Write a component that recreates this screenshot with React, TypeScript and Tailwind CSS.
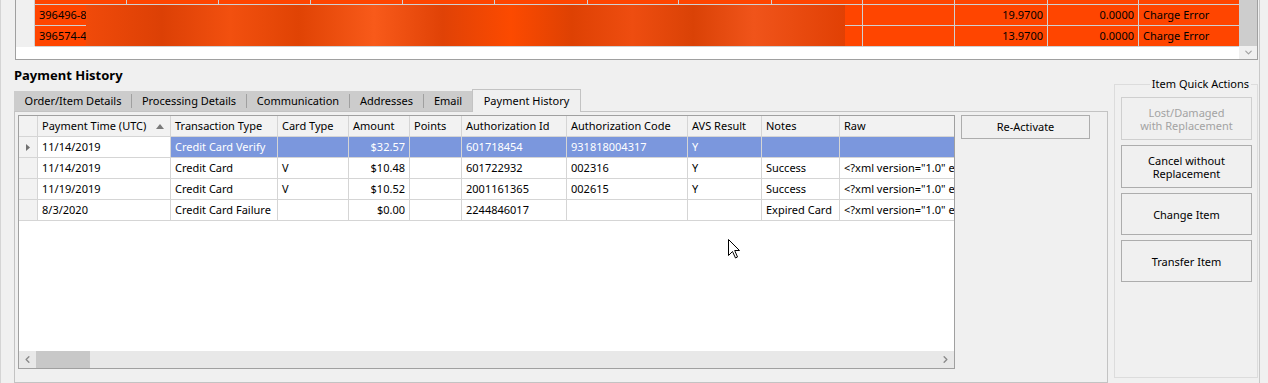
import { ChevronDown, ChevronLeft, ChevronRight } from "lucide-react";

const topCols = [
  "w-[92px]", "w-[92px]", "w-[92px]", "w-[92px]", "w-[92px]", "w-[93px]", "w-[91px]",
  "w-[93px]", "w-[91px]", "w-[92px]", "w-[93px]", "w-[91px]", "w-[100px]",
];

const topRows = [
  ["396496-8", "", "", "", "", "", "", "", "", "", "19.9700", "0.0000", "Charge Error"],
  ["396574-4", "", "", "", "", "", "", "", "", "", "13.9700", "0.0000", "Charge Error"],
];

const columns = [
  { label: "Payment Time (UTC)", w: "w-[133px]", sort: true },
  { label: "Transaction Type", w: "w-[107px]" },
  { label: "Card Type", w: "w-[71px]" },
  { label: "Amount", w: "w-[61px]", right: true },
  { label: "Points", w: "w-[52px]" },
  { label: "Authorization Id", w: "w-[105px]" },
  { label: "Authorization Code", w: "w-[121px]" },
  { label: "AVS Result", w: "w-[74px]" },
  { label: "Notes", w: "w-[78px]" },
  { label: "Raw", w: "w-[160px]" },
];

const raw = '<?xml version="1.0" encoding="utf-8"?>';

const payments = [
  ["11/14/2019", "Credit Card Verify", "", "$32.57", "", "601718454", "931818004317", "Y", "", ""],
  ["11/14/2019", "Credit Card", "V", "$10.48", "", "601722932", "002316", "Y", "Success", raw],
  ["11/19/2019", "Credit Card", "V", "$10.52", "", "2001161365", "002615", "Y", "Success", raw],
  ["8/3/2020", "Credit Card Failure", "", "$0.00", "", "2244846017", "", "", "Expired Card", raw],
];

const tabs = [
  { label: "Order/Item Details", w: "w-[116px]" },
  { label: "Processing Details", w: "w-[114px]" },
  { label: "Communication", w: "w-[102px]" },
  { label: "Addresses", w: "w-[73px]" },
];

function TopGrid() {
  return (
    <div className="relative ml-[14px] flex h-[60px] w-[1243px] border-x border-b border-[#a0a0a0] bg-white">
      <div className="flex w-[1223px] flex-col">
        <div className="flex h-[4px]">
          <div className="w-[19px] border-r border-[#d0d0d0] bg-[#f0f0f0]" />
          {topCols.map((w, i) => (
            <div key={i} className={`${w} bg-[#ff4500] ${i < 12 ? "border-r border-[#d0d0d0]" : ""}`} />
          ))}
        </div>
        {topRows.map((row, r) => (
          <div key={r} className="flex h-[21px]">
            <div className="w-[19px] border-r border-[#d0d0d0] bg-[#f0f0f0]" />
            {row.map((v, i) => (
              <div
                key={i}
                className={`${topCols[i]} flex items-center overflow-hidden whitespace-nowrap border-t border-[#d0d0d0] bg-[#ff4500] px-[4px] leading-[20px] ${
                  i < 12 ? "border-r" : ""
                } ${i === 10 || i === 11 ? "justify-end" : ""}`}
              >
                {v}
              </div>
            ))}
          </div>
        ))}
        <div className="flex h-[1px]">
          <div className="w-[19px] bg-[#f0f0f0]" />
          <div className="flex-1 bg-[#d0d0d0]" />
        </div>
      </div>
      <div className="flex w-[18px] flex-col bg-[#f0f0f0]">
        <div className="h-[46px] bg-[#cdcdcd]" />
        <div className="flex flex-1 items-center justify-center text-[#a0a0a0]">
          <ChevronDown size={11} strokeWidth={2.5} />
        </div>
      </div>
      {/* blurred customer data */}
      <div className="absolute left-[70px] top-[5px] h-[41px] w-[759px] bg-[linear-gradient(90deg,#f04a0a,#dc4005_10%,#f2500f_19%,#e04304_28%,#f85a1a_38%,#e04206_47%,#fc4a00_56%,#de4103_64%,#ee4d10_72%,#da4206_80%,#f0541a_88%,#e14004)]" />
    </div>
  );
}

function PaymentGrid() {
  return (
    <div className="flex h-[254px] w-[937px] flex-col overflow-hidden border border-[#a0a0a0] bg-white">
      <div className="flex h-[21px] shrink-0 border-b border-[#d5d5d5] bg-[#f2f2f2]">
        <div className="w-[19px] shrink-0 border-r border-[#d5d5d5]" />
        {columns.map((c) => (
          <div
            key={c.label}
            className={`${c.w} flex shrink-0 items-center justify-between whitespace-nowrap border-r border-[#d5d5d5] px-[4px]`}
          >
            <span>{c.label}</span>
            {c.sort && (
              <svg width="8" height="5" viewBox="0 0 8 5" className="mr-[2px]">
                <path d="M0 5 L4 0 L8 5 Z" fill="#7a7a7a" />
              </svg>
            )}
          </div>
        ))}
      </div>
      {payments.map((row, r) => (
        <div key={r} className="flex h-[21px] shrink-0 border-b border-[#d5d5d5]">
          <div className="flex w-[19px] shrink-0 items-center justify-center border-r border-[#d5d5d5] bg-[#f2f2f2]">
            {r === 0 && (
              <svg width="4" height="7" viewBox="0 0 4 7">
                <path d="M0 0 L4 3.5 L0 7 Z" fill="#707070" />
              </svg>
            )}
          </div>
          {row.map((v, i) => {
            const selected = r === 0 && i > 0;
            return (
              <div
                key={i}
                className={`${columns[i].w} flex shrink-0 items-center overflow-hidden whitespace-nowrap border-r border-[#d5d5d5] px-[4px] ${
                  columns[i].right ? "justify-end" : ""
                } ${selected ? "bg-[#7b97dd] text-white" : ""}`}
              >
                {v}
              </div>
            );
          })}
        </div>
      ))}
      <div className="flex-1" />
      <div className="flex h-[17px] shrink-0 bg-[#e8e8e8] text-[#8a8a8a]">
        <div className="flex w-[17px] items-center justify-center">
          <ChevronLeft size={11} strokeWidth={3} />
        </div>
        <div className="w-[54px] bg-[#c8c8c8]" />
        <div className="flex-1" />
        <div className="flex w-[17px] items-center justify-center">
          <ChevronRight size={11} strokeWidth={3} />
        </div>
      </div>
    </div>
  );
}

function ActionButton({ children, disabled, h }: { children: React.ReactNode; disabled?: boolean; h: string }) {
  return (
    <div
      className={`${h} flex w-[131px] items-center justify-center border text-center leading-[13px] ${
        disabled ? "border-[#cfcfcf] text-[#a3a3a3]" : "border-[#adadad]"
      }`}
    >
      {children}
    </div>
  );
}

export default function App() {
  return (
    <div className="relative flex h-[383px] w-[1268px] overflow-hidden bg-[#f0f0f0] font-['Noto_Sans',sans-serif] text-[11px] text-black">
      <div className="w-px bg-[#d4d4d4]" />
      <div className="flex w-[1258px] flex-col">
        <TopGrid />
        <div className="flex">
          <div className="flex w-[1107px] flex-col pl-[13px]">
            <div className="h-[29px] pt-[6px] text-[13px] font-bold leading-[18px]">Payment History</div>
            <div className="flex h-[22px] items-end">
              <div className="flex h-[20px] items-center bg-[#cccccc] pl-px">
                {tabs.map((t) => (
                  <div key={t.label} className="flex items-center">
                    <div className={`${t.w} text-center`}>{t.label}</div>
                    <div className="h-[14px] w-px bg-[#a0a0a0]" />
                  </div>
                ))}
                <div className="w-[48px] text-center">Email</div>
              </div>
              <div className="relative z-10 -mb-px flex h-[23px] w-[109px] items-center justify-center border-x border-t border-[#c3c3c3] bg-[#f0f0f0]">
                Payment History
              </div>
            </div>
            <div className="flex h-[272px] border border-[#c3c3c3] pl-[3px] pt-[3px]">
              <PaymentGrid />
              <div className="ml-[6px] flex h-[24px] w-[129px] items-center justify-center border border-[#adadad]">
                Re-Activate
              </div>
            </div>
          </div>
          <div className="relative ml-[6px] mt-[24px] flex h-[294px] w-[144px] flex-col gap-[5px] border border-[#dcdcdc] pl-[6px] pt-[12px]">
            <div className="absolute right-[6px] top-[-9px] bg-[#f0f0f0] px-[2px] leading-[16px]">Item Quick Actions</div>
            <ActionButton h="h-[43px]" disabled>
              Lost/Damaged
              <br />
              with Replacement
            </ActionButton>
            <ActionButton h="h-[43px]">
              Cancel without
              <br />
              Replacement
            </ActionButton>
            <ActionButton h="h-[42px]">Change Item</ActionButton>
            <ActionButton h="h-[42px]">Transfer Item</ActionButton>
          </div>
        </div>
      </div>
      <div className="w-px bg-[#c8c8c8]" />
      <svg className="absolute left-[728px] top-[239px]" width="13" height="20" viewBox="0 0 13 20">
        <path d="M0.5 0.5 L0.5 16.5 L4.5 12.5 L7.5 19 L9.5 18 L6.7 11.5 L11.5 11.5 Z" fill="white" stroke="black" strokeWidth="1" />
      </svg>
    </div>
  );
}
